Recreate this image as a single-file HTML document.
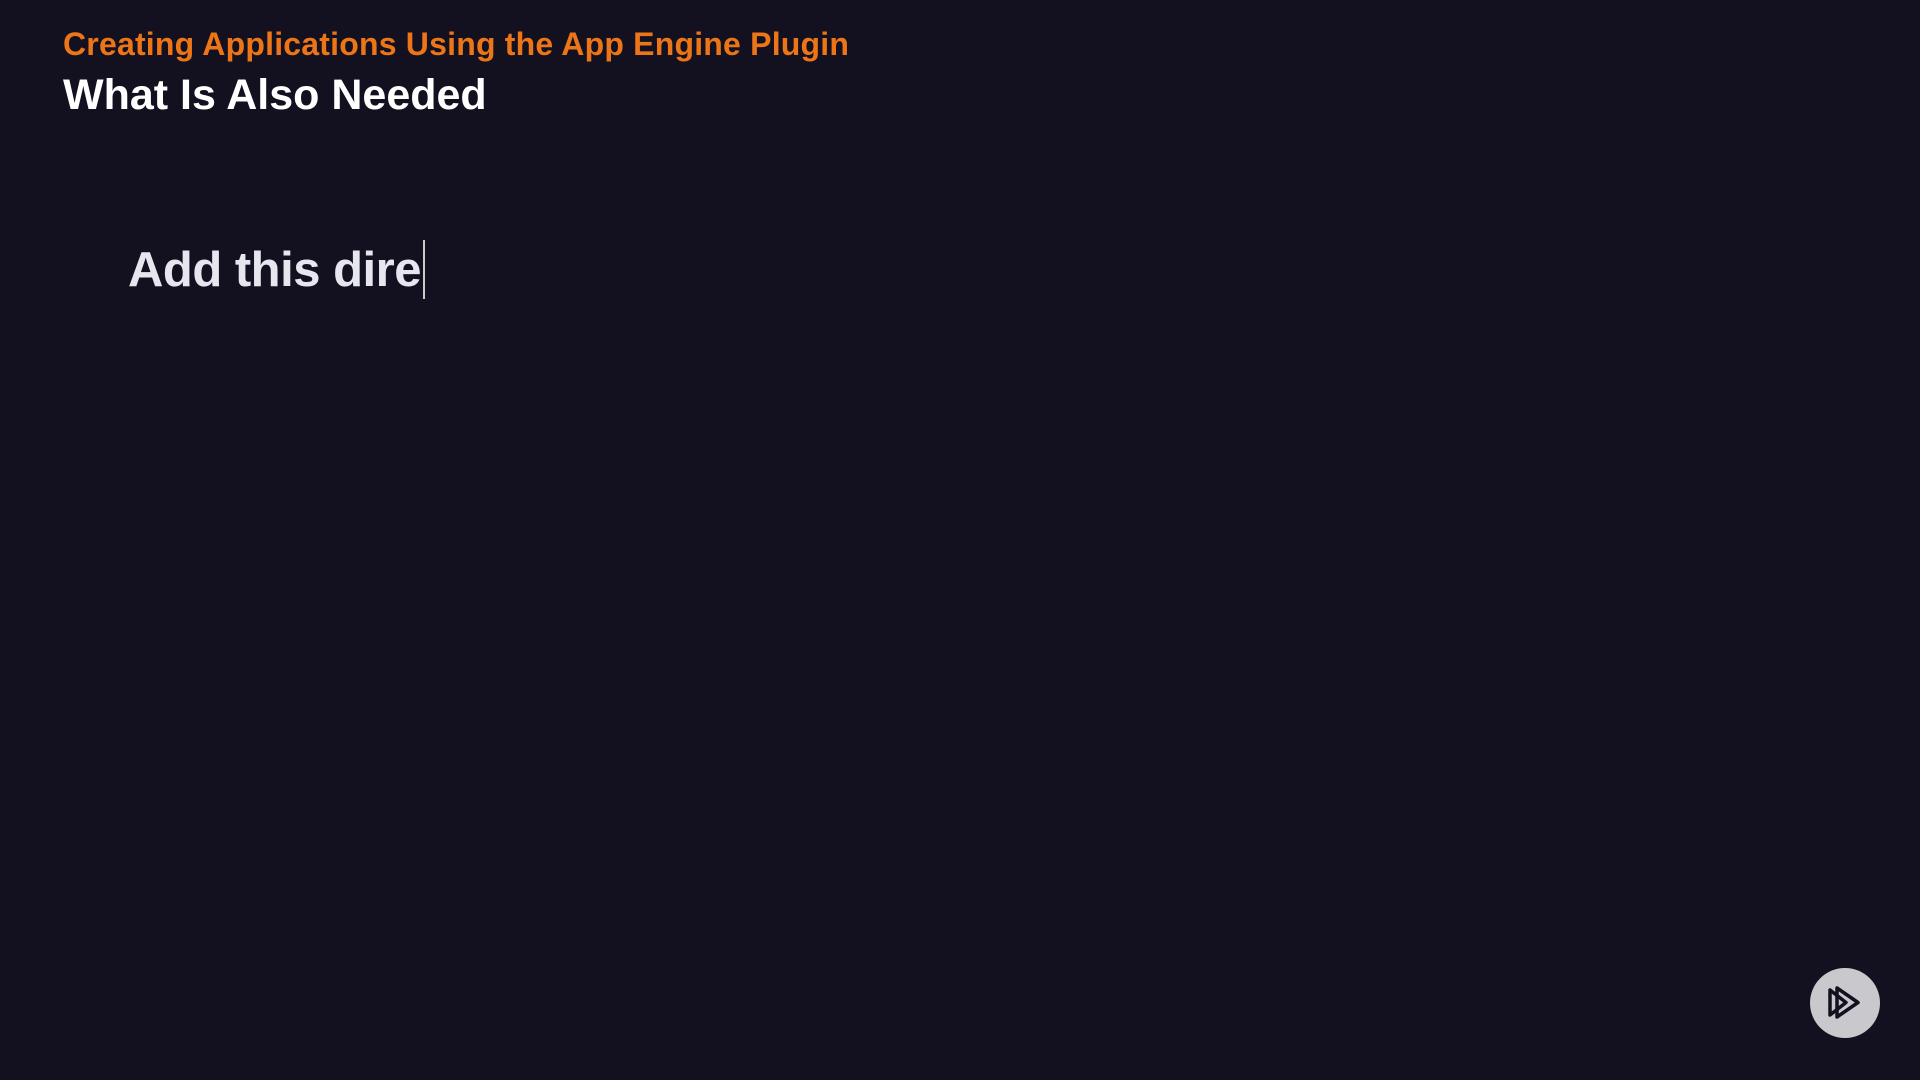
<!DOCTYPE html>
<html><head><style>
body{margin:0;width:1920px;height:1080px;background:#13111f;overflow:hidden;position:relative;font-family:"Liberation Sans",sans-serif;}
.a{position:absolute;left:63px;top:26px;font-size:32px;font-weight:bold;color:#ec7518;letter-spacing:0.2px;white-space:nowrap}
.b{position:absolute;left:63px;top:71px;font-size:43px;font-weight:bold;color:#fff;letter-spacing:0px;white-space:nowrap}
.c{position:absolute;left:128px;top:242px;font-size:49px;font-weight:bold;color:#e6e6ee;white-space:nowrap;letter-spacing:-0.5px}
.cur{position:absolute;left:423px;top:240px;width:2px;height:59px;background:#ccc}
.btn{position:absolute;left:1810px;top:968px;width:70px;height:70px;border-radius:50%;background:#c9c9cd}
</style></head><body>
<div class="a">Creating Applications Using the App Engine Plugin</div>
<div class="b">What Is Also Needed</div>
<div class="c">Add this dire</div>
<div class="cur"></div>
<div class="btn"><svg width="70" height="70" viewBox="0 0 70 70"><path d="M20 22 L20 47 L36 34.5 Z" fill="none" stroke="#13111f" stroke-width="3.5" stroke-linejoin="round"/><path d="M27 20 L27 49 L48 34.5 Z" fill="none" stroke="#13111f" stroke-width="3.5" stroke-linejoin="round"/></svg></div>
</body></html>
